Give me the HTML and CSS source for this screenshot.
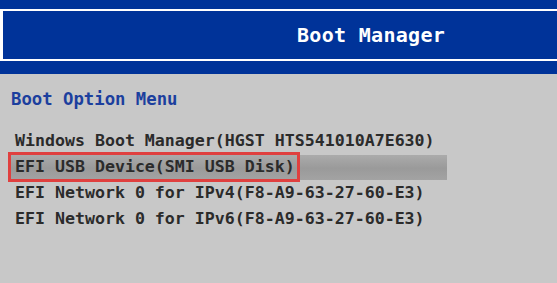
FILE: index.html
```html
<!DOCTYPE html>
<html lang="en">
<head>
    <meta charset="UTF-8">
    <meta name="viewport" content="width=device-width, initial-scale=1.0">
    <title>Boot Manager</title>
    <link rel="stylesheet" href="styles.css">
</head>
<body>
    <div class="header">
        <div class="header-box">
            <h1 class="title">Boot Manager</h1>
        </div>
    </div>

    <div class="content">
        <h2 class="menu-title">Boot Option Menu</h2>
        <ul class="boot-list">
            <li class="boot-item">Windows Boot Manager(HGST HTS541010A7E630)</li>
            <li class="boot-item selected">EFI USB Device(SMI USB Disk)</li>
            <li class="boot-item">EFI Network 0 for IPv4(F8-A9-63-27-60-E3)</li>
            <li class="boot-item">EFI Network 0 for IPv6(F8-A9-63-27-60-E3)</li>
        </ul>
    </div>
</body>
</html>
```

FILE: styles.css
```css
*,
*::before {
    box-sizing: border-box;
    margin: 0;
    padding: 0;
}

body {
    font-family: "DejaVu Sans Mono", "Liberation Mono", monospace;
    background-color: #c8c8c8;
    color: #2b2b2b;
}

.header {
    height: 74px;
    background: #003399;
    padding-top: 9px;
}

.header-box {
    height: 52px;
    border-top: 2px solid #fff;
    border-bottom: 2px solid #fff;
    border-left: 3px solid #fff;
    padding-left: 294px;
}

.title {
    font-size: 20px;
    line-height: 48px;
    font-weight: bold;
    color: #fff;
    letter-spacing: 0.3px;
}

.content {
    padding: 15px 0 0 10px;
}

.menu-title {
    font-size: 17.3px;
    line-height: 20px;
    font-weight: bold;
    color: #1c3f9e;
    padding-left: 1px;
}

.boot-list {
    list-style: none;
    margin-top: 19px;
    width: 437px;
}

.boot-item {
    font-size: 16.6px;
    line-height: 26px;
    font-weight: bold;
    padding-left: 5px;
    white-space: nowrap;
}

.boot-item.selected {
    position: relative;
    background: linear-gradient(transparent 1px, #ababab 1px, #9a9a9a 55%, #a3a3a3);
}

/* red annotation frame */
.boot-item.selected::before {
    content: "";
    position: absolute;
    left: -2px;
    top: -2px;
    width: 292px;
    height: 30px;
    border: 3px solid #e0403f;
}
```
